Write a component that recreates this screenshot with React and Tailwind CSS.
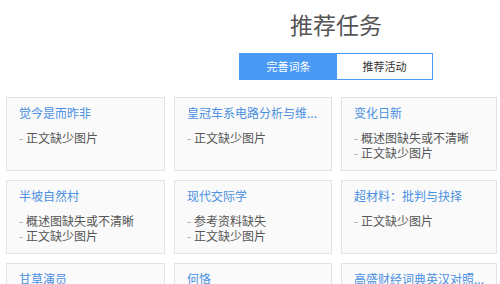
import React from "react";

const cards = [
  { title: "觉今是而昨非", items: ["正文缺少图片"] },
  { title: "皇冠车系电路分析与维...", items: ["正文缺少图片"] },
  { title: "变化日新", items: ["概述图缺失或不清晰", "正文缺少图片"] },
  { title: "半坡自然村", items: ["概述图缺失或不清晰", "正文缺少图片"] },
  { title: "现代交际学", items: ["参考资料缺失", "正文缺少图片"] },
  { title: "超材料：批判与抉择", items: ["正文缺少图片"] },
  { title: "甘草演员", items: ["正文缺少图片"] },
  { title: "何恪", items: ["正文缺少图片"] },
  { title: "高盛财经词典英汉对照...", items: ["正文缺少图片"] },
];

export default function App() {
  return (
    <div
      className="w-[500px] h-[284px] overflow-hidden bg-white"
      style={{ fontFamily: '"Noto Sans CJK SC", "Noto Sans", sans-serif' }}
    >
      <div className="pl-[172px] flex flex-col items-center">
        <div className="pt-[8px] text-[23px] leading-[32px] text-[#555555]">推荐任务</div>
        <div className="mt-[13px] flex h-[27px] border border-[#4a9af5]">
          <div className="w-[97px] flex items-center justify-center bg-[#4a9af5] text-white text-[11px]">
            完善词条
          </div>
          <div className="w-[95px] flex items-center justify-center bg-white text-[#333333] text-[11px]">
            推荐活动
          </div>
        </div>
      </div>
      <div className="mt-[17px] pl-[6px] grid grid-cols-[159px_158px_156px] gap-x-[9px] gap-y-[9px]">
        {cards.map((c, i) => (
          <div
            key={i}
            className="h-[74px] border border-[#e3e3e3] bg-[#fafafa] pt-[7px] px-[12px]"
          >
            <div className="text-[12px] leading-[16px] text-[#4a90e2] whitespace-nowrap overflow-hidden">
              {c.title}
            </div>
            <div className="mt-[9px]">
              {c.items.map((t, j) => (
                <div key={j} className="text-[12px] leading-[15px] text-[#555555] whitespace-nowrap">
                  <span className="text-[#aaaaaa]">-</span> {t}
                </div>
              ))}
            </div>
          </div>
        ))}
      </div>
    </div>
  );
}
